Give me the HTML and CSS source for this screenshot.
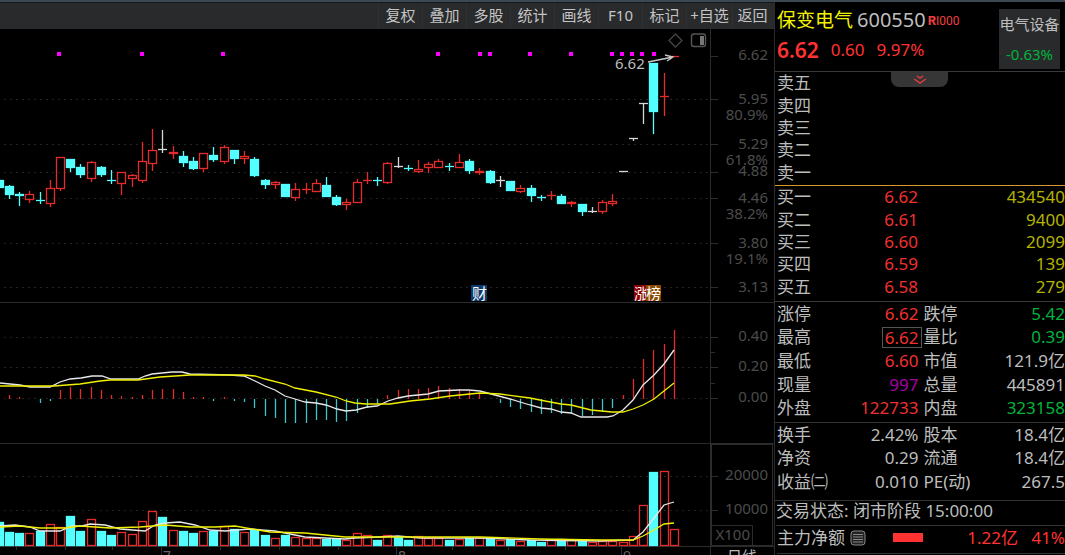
FILE: index.html
```html
<!DOCTYPE html>
<html lang="zh-CN">
<head>
<meta charset="utf-8">
<title>保变电气 600550</title>
<link rel="stylesheet" href="styles.css">
</head>
<body>
<div class="app">
  <main class="charts">
    <nav class="toolbar">
      <button class="tool">复权</button>
      <button class="tool">叠加</button>
      <button class="tool">多股</button>
      <button class="tool">统计</button>
      <button class="tool">画线</button>
      <button class="tool">F10</button>
      <button class="tool">标记</button>
      <button class="tool tool-wide">+自选</button>
      <button class="tool tool-last">返回</button>
    </nav>
    <svg class="pane" id="price" viewBox="0 29 774 274" role="img" aria-label="K线"></svg>
    <svg class="pane" id="macd" viewBox="0 303 774 141" role="img" aria-label="MACD"></svg>
    <svg class="pane" id="volume" viewBox="0 444 774 111" role="img" aria-label="成交量"></svg>
  </main>

  <aside class="quote">
    <header class="head">
      <div class="head-main">
        <h1 class="title"><span class="name">保变电气</span><span class="code">600550</span><span class="mark"><b>R</b>I000</span></h1>
        <p class="last"><strong>6.62</strong><span>0.60</span><span>9.97%</span></p>
      </div>
      <a class="sector" href="#"><span>电气设备</span><span class="green">-0.63%</span></a>
    </header>

    <section class="sell">
      <button class="fold" aria-label="展开">
        <svg class="fold-icon" viewBox="0 0 14 10"><path d="M4 1l3 2 3-2M1 4l6 4 6-4"/></svg>
      </button>
      <table class="depth">
        <tr><th>卖五</th><td></td><td></td></tr>
        <tr><th>卖四</th><td></td><td></td></tr>
        <tr><th>卖三</th><td></td><td></td></tr>
        <tr><th>卖二</th><td></td><td></td></tr>
        <tr><th>卖一</th><td></td><td></td></tr>
      </table>
    </section>

    <section class="buy">
      <table class="depth">
        <tr><th>买一</th><td class="red">6.62</td><td class="olive">434540</td></tr>
        <tr><th>买二</th><td class="red">6.61</td><td class="olive">9400</td></tr>
        <tr><th>买三</th><td class="red">6.60</td><td class="olive">2099</td></tr>
        <tr><th>买四</th><td class="red">6.59</td><td class="olive">139</td></tr>
        <tr><th>买五</th><td class="red">6.58</td><td class="olive">279</td></tr>
      </table>
    </section>

    <dl class="stats stats-day">
      <div><dt>涨停</dt><dd class="red">6.62</dd></div><div><dt>跌停</dt><dd class="green">5.42</dd></div>
      <div><dt>最高</dt><dd class="red boxed">6.62</dd></div><div><dt>量比</dt><dd class="green">0.39</dd></div>
      <div><dt>最低</dt><dd class="red">6.60</dd></div><div><dt>市值</dt><dd>121.9亿</dd></div>
      <div><dt>现量</dt><dd class="purple">997</dd></div><div><dt>总量</dt><dd>445891</dd></div>
      <div><dt>外盘</dt><dd class="red">122733</dd></div><div><dt>内盘</dt><dd class="green">323158</dd></div>
    </dl>

    <dl class="stats stats-base">
      <div><dt>换手</dt><dd>2.42%</dd></div><div><dt>股本</dt><dd>18.4亿</dd></div>
      <div><dt>净资</dt><dd>0.29</dd></div><div><dt>流通</dt><dd>18.4亿</dd></div>
      <div><dt>收益㈡</dt><dd>0.010</dd></div><div><dt>PE(动)</dt><dd>267.5</dd></div>
    </dl>

    <p class="status">交易状态: 闭市阶段 15:00:00</p>

    <div class="flow">
      <span>主力净额</span>
      <svg class="note" viewBox="0 0 16 16"><rect x="1" y="1" width="14" height="14" rx="3"/><path d="M3 4.500h10M3 7h10M3 9.500h10M3 12h10"/></svg>
      <span class="flow-bar"></span>
      <span class="flow-sum">1.22亿</span>
      <span class="flow-share">41%</span>
    </div>
  </aside>
</div>
<script src="chart.js"></script>
</body>
</html>
```

FILE: styles.css
```css
* {
  box-sizing: border-box;
}

body {
  margin: 0;
  background: #000;
  color: #bdbdbd;
  font-family: "Noto Sans", "Noto Sans CJK SC", sans-serif;
  font-size: 17px;
  overflow: hidden;
}

h1, p, dl, dd {
  margin: 0;
}

button {
  margin: 0;
  padding: 0;
  border: 0;
  background: none;
  color: inherit;
  font: inherit;
}

.app {
  display: grid;
  grid-template-columns: 1fr 291px;
  border-top: 2px solid #3c4955;
}

/* Charts */
.charts {
  min-width: 0;
}

.toolbar {
  display: flex;
  justify-content: flex-end;
  height: 27px;
  padding-right: 2px;
  background: #292a2c;
  border-top: 1px solid #15171a;
}

.tool {
  width: 44px;
  padding-bottom: 2px;
  border-left: 1px solid #2f3032;
  color: #c4c4c4;
  font-size: 15px;
  line-height: 24px;
  white-space: nowrap;
}

.tool-wide {
  width: 46px;
}

.tool-last {
  width: 40px;
}

.pane {
  display: block;
  width: 100%;
}

.grid {
  stroke: #242424;
  stroke-dasharray: 2 4;
}

.frame {
  fill: none;
  stroke: #2c2c2c;
}

.axis {
  fill: #4c4c4c;
  font-size: 15px;
  text-anchor: end;
}

.month {
  fill: #666;
  font-size: 14px;
}

.period {
  fill: #bdbdbd;
  font-size: 15px;
}

.up {
  fill: none;
  stroke: #e62b2b;
  stroke-width: 1.3;
}

.down {
  fill: #54ffff;
  stroke: #54ffff;
  stroke-width: 1.3;
}

.flat {
  fill: #d8d8d8;
  stroke: #d8d8d8;
  stroke-width: 1.3;
}

.neg {
  stroke: #40c4c8;
  stroke-width: 1.3;
}

.line-fast,
.line-slow {
  fill: none;
  stroke: #e8e8e8;
  stroke-width: 1.3;
}

.line-slow {
  stroke: #f0f000;
}

.event {
  fill: #f0f;
}

.callout {
  fill: #bdbdbd;
  font-size: 15px;
}

.arrow {
  fill: none;
  stroke: #c8c8c8;
  stroke-width: 1.3;
}

.widget {
  fill: none;
  stroke: #555;
  stroke-width: 1.4;
}

.widget-dim {
  stroke: #444;
}

.widget-fill {
  fill: #777;
}

.tag {
  fill: #fff;
  font-size: 15px;
}

.tag-blue {
  fill: #0b3a6e;
}

.tag-red {
  fill: #8c0000;
}

.tag-brown {
  fill: #8a4a00;
}

/* Quote panel */
.quote {
  padding-left: 2px;
  border-left: 1px solid #2c2c2c;
  line-height: 22px;
}

.head {
  display: flex;
  justify-content: space-between;
  height: 70px;
  margin-left: -2px;
  padding: 7px 5px 2px 2px;
  border-bottom: 1px solid #3a3a3a;
}

.title {
  display: flex;
  align-items: center;
  height: 22px;
  font-weight: 400;
  white-space: nowrap;
}

.name {
  color: #f2f200;
  font-size: 19px;
}

.code {
  margin-left: 4px;
  font-size: 20px;
}

.mark {
  margin-left: 2px;
  color: #f04040;
  font: 12px Roboto, sans-serif;
}

.mark b {
  font-size: 13px;
}

.last {
  display: flex;
  align-items: center;
  gap: 12px;
  height: 38px;
  color: #ff3232;
}

.last strong {
  font-size: 21px;
  font-weight: 600;
}

.sector {
  display: flex;
  flex-direction: column;
  justify-content: space-between;
  align-items: center;
  width: 61px;
  height: 60px;
  padding: 4px 0;
  background: #292a2c;
  color: #bdbdbd;
  font-size: 15px;
  text-decoration: none;
  white-space: nowrap;
}

.sell {
  position: relative;
  height: 113px;
}

.fold {
  position: absolute;
  top: 0;
  left: 114px;
  width: 57px;
  height: 15px;
  border-radius: 0 0 8px 8px;
  background: #363636;
}

.fold-icon {
  display: block;
  width: 14px;
  height: 10px;
  margin: 0 auto;
  fill: none;
  stroke: #e03a3a;
  stroke-width: 1.5;
}

.buy {
  height: 117px;
  margin-left: -2px;
  padding-left: 2px;
  border-top: 1px solid #d8982c;
  border-bottom: 1px solid #3a3a3a;
}

.depth {
  width: 100%;
  height: 112px;
  table-layout: fixed;
  border-collapse: collapse;
}

.depth th {
  width: 40px;
  padding: 0;
  font-weight: 400;
  line-height: 20px;
  text-align: left;
}

.depth td {
  padding: 0;
  line-height: 20px;
  text-align: right;
}

.depth td:nth-child(2) {
  width: 101px;
}

.stats {
  display: grid;
  grid-template-columns: 1fr 1fr;
  column-gap: 5px;
  margin-left: -2px;
  padding-left: 2px;
  border-bottom: 1px solid #333;
}

.stats div {
  display: flex;
  justify-content: space-between;
  align-items: center;
  white-space: nowrap;
}

.stats-day {
  height: 121px;
  padding-bottom: 2px;
}

.stats-base {
  height: 78px;
  padding-bottom: 6px;
}

.boxed {
  margin-right: -3px;
  padding: 0 2px;
  border: 1px solid #555;
  line-height: 19px;
}

.status {
  height: 25px;
  margin-left: -1px;
  border-bottom: 1px solid #333;
  line-height: 20px;
}

.flow {
  display: flex;
  align-items: center;
  height: 28px;
  padding-bottom: 4px;
  border-bottom: 1px solid #333;
}

.note {
  width: 16px;
  height: 16px;
  margin-left: 5px;
  fill: #222;
  stroke: #888;
}

.flow-bar {
  width: 30px;
  height: 9px;
  margin-left: 27px;
  background: #ff3232;
}

.flow-sum {
  margin-left: auto;
  color: #ff3232;
}

.flow-share {
  width: 47px;
  color: #ff3232;
  text-align: right;
}

.red { color: #f03030; }
.green { color: #00b43c; }
.olive { color: #b4b400; }
.purple { color: #a800a8; }
```

FILE: chart.js
```js
const NS = "http://www.w3.org/2000/svg";
const STEP = 10.23;
const AXIS_X = 710.5;

function add(parent, tag, attrs, text) {
  const el = document.createElementNS(NS, tag);
  for (const key in attrs) el.setAttribute(key, attrs[key]);
  if (text) el.textContent = text;
  parent.appendChild(el);
  return el;
}

function line(parent, x1, y1, x2, y2, cls) {
  add(parent, "line", { x1, y1, x2, y2, class: cls });
}

function xAt(i) {
  return Math.round(i * STEP - 1.4);
}

function axis(parent, ys, labels) {
  ys.forEach(y => {
    line(parent, 4, y + 0.5, 708, y + 0.5, "grid");
    line(parent, 711, y + 0.5, 718, y + 0.5, "frame");
  });
  labels.forEach(([text, y]) => add(parent, "text", { x: 768, y: y + 5, class: "axis" }, text));
}

// kind, high, body top, body bottom, low
const candles = `d 180 180 188 188|d 185 186 195 199|d 192 194 196 206|u 191 194 200 203|d 192 200 201 204
u 180 188 204 207|u 157 157 189 191|d 159 159 168 172|d 164 167 175 178|u 161 162 179 182
d 166 167 175 177|d 170 180 181 184|u 172 172 184 195|u 174 175 179 187|u 142 161 181 183
u 129 150 164 171|w 130 149 150 153|u 146 152 154 159|d 151 156 163 167|d 157 161 169 170
u 153 153 169 172|d 147 155 160 162|u 145 147 162 164|d 150 150 159 164|u 151 156 159 164
d 157 159 176 177|d 179 180 185 189|u 181 182 185 189|d 184 184 197 197|u 183 189 198 201
u 183 189 190 194|u 179 183 192 192|d 177 185 197 197|d 195 197 205 206|u 199 202 205 210
u 179 182 203 203|u 172 180 181 184|d 177 180 181 186|u 162 163 183 184|w 157 166 167 168
d 165 168 169 171|u 160 169 172 173|u 162 164 168 173|u 159 161 168 168|d 163 166 167 171
u 154 162 168 168|d 159 161 171 174|u 168 171 173 175|d 170 171 183 184|w 176 180 181 187
d 181 181 191 191|u 185 188 192 193|d 185 188 196 202|d 195 197 198 201|u 191 195 196 200
d 194 196 204 204|u 201 202 204 207|d 204 204 212 216|w 207 211 212 213|u 200 202 212 214
u 194 201 204 206|w 171 171 172 172|w 138 138 139 141|w 103 103 104 124|d 63 63 112 134
u 73 96 97 116|u 56 56 57 57`.split(/[|\n]/).map(row => row.split(" "));
const kinds = { u: "up", d: "down", w: "flat" };

function drawPrice() {
  const svg = document.getElementById("price");
  axis(svg, [99, 144, 172, 198, 243, 287], [
    ["6.62", 55], ["5.95", 99], ["80.9%", 115], ["5.29", 144], ["61.8%", 160], ["4.88", 171],
    ["4.46", 198], ["38.2%", 214], ["3.80", 243], ["19.1%", 259], ["3.13", 287]]);
  line(svg, 711, 56.5, 718, 56.5, "frame");
  line(svg, AXIS_X, 29, AXIS_X, 302, "frame");
  line(svg, 0, 302.5, 774, 302.5, "frame");
  [59, 142, 223, 438, 480, 490, 530, 571, 612, 622, 632, 642, 654].forEach(x =>
    add(svg, "rect", { x: x - 2, y: 52, width: 4, height: 4, class: "event" }));

  candles.forEach(([kind, ...values], i) => {
    const [high, top, bottom, low] = values.map(Number);
    const x = xAt(i) + 0.5;
    const cls = kinds[kind];
    if (top > high) line(svg, x, high, x, top, cls);
    if (low > bottom) line(svg, x, bottom, x, low, cls);
    if (bottom - top < 2) {
      line(svg, x - 4.5, top + 0.5, x + 4.5, top + 0.5, cls);
      line(svg, x, top, x, bottom, cls);
    } else {
      add(svg, "rect", { x: x - 4, y: top + 0.5, width: 8, height: bottom - top - 1, class: cls });
    }
  });

  add(svg, "text", { x: 615, y: 69, class: "callout" }, "6.62");
  add(svg, "path", { d: "M648 62L673 57M665 55L673 57L667 61", class: "arrow" });
  add(svg, "path", { d: "M675.500 34l6.500 6.500-6.500 6.500-6.500-6.500z", class: "widget widget-dim" });
  add(svg, "rect", { x: 691.5, y: 34, width: 14, height: 12.5, rx: 2.5, class: "widget" });
  add(svg, "rect", { x: 700, y: 36, width: 4, height: 9, class: "widget-fill" });

  add(svg, "rect", { x: 471, y: 285, width: 16, height: 16, class: "tag-blue" });
  add(svg, "text", { x: 472, y: 299, class: "tag" }, "财");
  add(svg, "rect", { x: 634, y: 285, width: 13, height: 16, class: "tag-red" });
  add(svg, "text", { x: 634, y: 299, class: "tag" }, "涨");
  add(svg, "rect", { x: 646, y: 285, width: 15, height: 16, class: "tag-brown" });
  add(svg, "text", { x: 646, y: 299, class: "tag" }, "榜");
}

// Bar end for each session; 0 where there is no bar
const bars = [0, 395, 397, 0, 403, 401, 390, 387, 389, 387, 390, 395, 396, 397, 395, 390, 389, 389, 392, 397, 397, 401,
  397, 401, 402, 408, 416, 418, 423, 423, 423, 420, 420, 422, 421, 413, 408, 404, 395, 390, 389, 389, 388, 386, 388,
  389, 391, 393, 0, 403, 407, 409, 412, 414, 413, 414, 414, 416, 415, 412, 408, 395, 379, 359, 350, 344, 330];

function drawMacd() {
  const svg = document.getElementById("macd");
  axis(svg, [337, 367, 398], [["0.40", 336], ["0.20", 366], ["0.00", 397]]);
  line(svg, AXIS_X, 303, AXIS_X, 444, "frame");
  line(svg, 711, 352.5, 715, 352.5, "frame");
  line(svg, 711, 383.5, 715, 383.5, "frame");
  line(svg, 0, 443.5, 774, 443.5, "frame");
  bars.forEach((y, i) => {
    if (y) line(svg, xAt(i) + 0.5, 399, xAt(i) + 0.5, y, y < 399 ? "up" : "neg");
  });
  add(svg, "polyline", { class: "line-fast", points: "0,383 10,384 20,385 30,387 50,387 60,382 70,379 81,378 92,376 102,376 111,379 138,379 145,376 152,374 172,372 182,372 190,374 230,375 244,376 255,381 265,386 275,390 285,396 295,399 305,402 316,403 326,405 337,409 346,411 356,410 367,407 377,406 388,401 398,398 408,396 428,394 439,391 459,390 469,390 480,391 495,395 510,399 520,402 530,405 541,408 551,409 561,412 571,413 581,417 607,417 613,416 623,410 633,400 643,385 654,375 664,364 674,350" });
  add(svg, "polyline", { class: "line-slow", points: "0,386 54,386 80,384 100,381 110,380 138,380 160,377 190,375 244,375 255,376 265,379 285,384 295,388 316,392 336,397 346,401 355,403 366,404 390,404 410,401 430,399 450,396 480,393 500,394 530,398 545,401 561,404 571,405 591,410 612,412 623,412 633,409 643,405 654,399 664,391 674,383" });
}

const volumes = `d522 d532 d533 u533 d531 u524 u527 d516 d531 u519 d531 d535 u532 u534 u521 u511 d517 u530 d531 d533
u531 d531 u526 d529 u532 d529 d535 u538 d535 u537 u538 u538 d539 d539 u540 u533 u535 d540 u535 d537
d540 u536 u538 u538 d540 u539 d538 u538 d538 u540 d539 u541 d540 d542 u540 d539 u540 d540 u542 u541
u541 u542 u536 u505 d472 u471 u529`.split(/\s/);

function drawVolume() {
  const svg = document.getElementById("volume");
  axis(svg, [476, 510], [["20000", 475], ["10000", 509]]);
  line(svg, AXIS_X, 444, AXIS_X, 555, "frame");
  add(svg, "rect", { x: 711.5, y: 444.5, width: 61, height: 101, class: "frame" });
  add(svg, "rect", { x: 711.5, y: 525.5, width: 41, height: 20, class: "frame" });
  add(svg, "text", { x: 750, y: 540, class: "axis" }, "X100");
  line(svg, 0, 546.5, 774, 546.5, "frame");
  volumes.forEach((item, i) => {
    const top = Number(item.slice(1));
    add(svg, "rect", { x: xAt(i) - 3.5, y: top + 0.5, width: 8, height: 545 - top, class: kinds[item[0]] });
  });
  add(svg, "polyline", { class: "line-fast", points: "0,526 15,525 30,527 40,531 60,531 72,526 82,526 90,524 105,525 120,529 145,531 155,525 165,523 180,522 195,525 210,530 225,531 250,529 275,531 290,534 305,537 345,539 355,538 380,537 398,536 420,538 480,538 530,540 600,541 633,540 643,532 654,518 664,505 674,502" });
  add(svg, "polyline", { class: "line-slow", points: "0,527 20,526 40,528 65,528 80,526 110,528 140,527 165,525 190,527 215,527 235,526 270,532 305,533 335,536 345,537 480,537 540,539 600,540 633,540 643,536 654,530 664,524 674,523" });
  [16, 65, 112, 220, 279, 338, 452, 508, 565].forEach(x => line(svg, x + 0.5, 547, x + 0.5, 550, "frame"));
  [[161, "7"], [396, "8"], [621, "9"]].forEach(([x, text]) => {
    line(svg, x + 0.5, 547, x + 0.5, 555, "frame");
    add(svg, "text", { x: x + 2, y: 561, class: "month" }, text);
  });
  add(svg, "text", { x: 727, y: 562, class: "period" }, "日线");
}

drawPrice();
drawMacd();
drawVolume();
```
